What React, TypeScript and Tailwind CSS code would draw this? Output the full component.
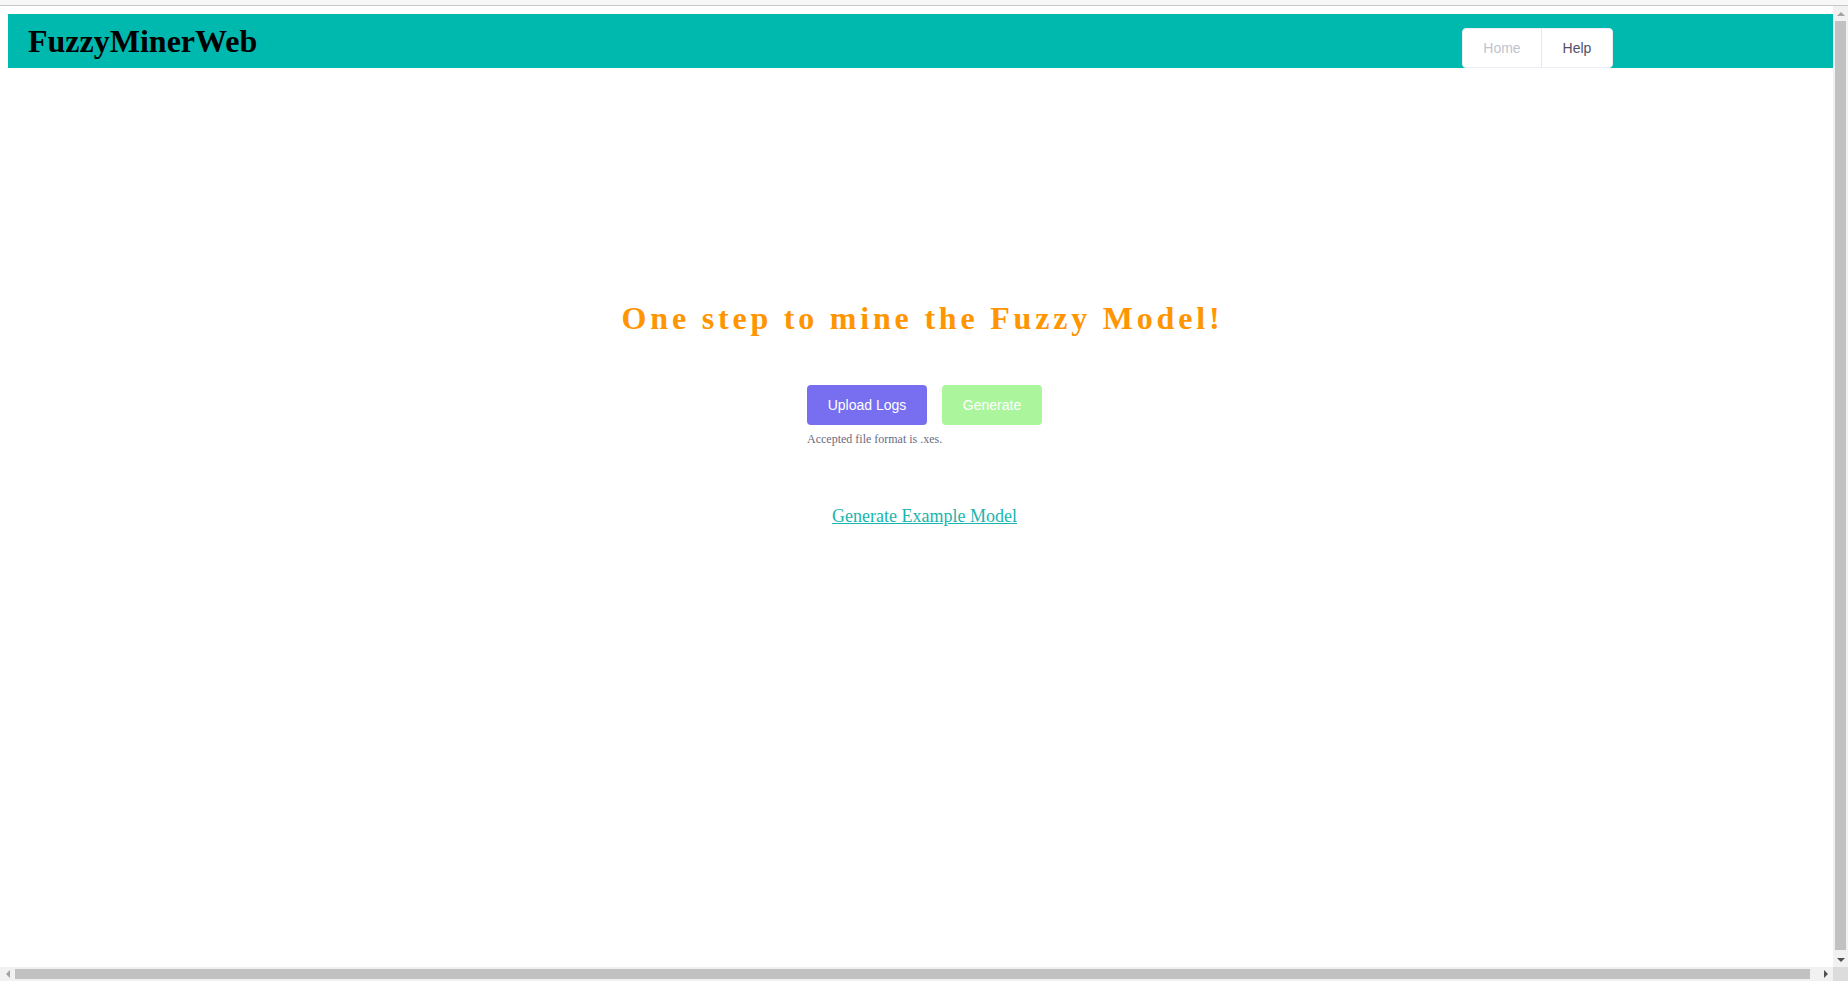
import React from 'react';

const serif = { fontFamily: '"Liberation Serif", "Times New Roman", serif' };
const sans = { fontFamily: '"Liberation Sans", Arial, sans-serif' };

const Header = () => (
    <header className="ml-[8px] mt-[8px] h-[54px] flex justify-between items-start bg-[#00b9ae]">
        <h1 style={serif} className="ml-[20px] mt-[9px] text-[32px] leading-[36px] font-bold text-black whitespace-nowrap">
            FuzzyMinerWeb
        </h1>

        {/* nav menu */}
        <nav style={sans} className="mt-[14px] mr-[220px] h-[40px] flex bg-white rounded-[4px] border border-[#ebeef5] text-[14px]">
            <a className="w-[79px] flex items-center justify-center text-[#c0c4cc] border-r border-[#e4e7ed]">Home</a>
            <a className="w-[70px] flex items-center justify-center text-[#505068]">Help</a>
        </nav>
    </header>
);

const Main = () => (
    <main className="pl-[16px] flex flex-col items-center">
        <h2 style={serif} className="mt-[230px] mr-[4px] text-[32px] leading-[40px] font-bold tracking-[3.8px] text-[#ff9500] whitespace-nowrap">
            One step to mine the Fuzzy Model!
        </h2>

        <div className="mt-[47px] flex flex-col items-start">
            <div style={sans} className="flex gap-[15px] text-[14px] text-white">
                <button className="w-[120px] h-[40px] rounded-[4px] bg-[#776ff0]">Upload Logs</button>
                <button className="w-[100px] h-[40px] rounded-[4px] bg-[#abf59c]">Generate</button>
            </div>
            <p style={serif} className="mt-[7px] text-[12px] leading-[14px] text-[#6b6b80]">
                Accepted file format is .xes.
            </p>
        </div>

        <a style={serif} className="mt-[60px] text-[18px] leading-[20px] text-[#19b5ae] underline">
            Generate Example Model
        </a>
    </main>
);

export default function App() {
    return (
        <div className="w-[1848px] h-[981px] flex flex-col bg-white overflow-hidden">
            {/* browser strip */}
            <div className="h-[6px] shrink-0 bg-[#f7f7f7] border-b border-[#c8c8c8]" />

            <div className="flex-1 flex min-h-0">
                <div className="flex-1 min-w-0 overflow-hidden flex flex-col">
                    <Header />
                    <Main />
                </div>

                {/* vertical scrollbar */}
                <div className="w-[15px] shrink-0 bg-[#f1f1f1] flex flex-col items-center">
                    <div className="h-[15px] flex items-center justify-center">
                        <div className="w-0 h-0 border-x-[4px] border-x-transparent border-b-[4px] border-b-[#a3a3a3]" />
                    </div>
                    <div className="flex-1 w-[11px] bg-[#c1c1c1] mb-[2px]" />
                    <div className="h-[15px] flex items-center justify-center">
                        <div className="w-0 h-0 border-x-[4px] border-x-transparent border-t-[4px] border-t-[#505050]" />
                    </div>
                </div>
            </div>

            {/* horizontal scrollbar */}
            <div className="h-[14px] shrink-0 flex">
                <div className="flex-1 bg-[#f1f1f1] flex items-center">
                    <div className="w-[15px] flex items-center justify-center">
                        <div className="w-0 h-0 border-y-[4px] border-y-transparent border-r-[4px] border-r-[#a3a3a3]" />
                    </div>
                    <div className="flex-1 h-[10px] bg-[#c1c1c1] mr-[8px]" />
                    <div className="w-[15px] flex items-center justify-center">
                        <div className="w-0 h-0 border-y-[4px] border-y-transparent border-l-[4px] border-l-[#505050]" />
                    </div>
                </div>
                <div className="w-[15px] bg-[#dcdcdc]" />
            </div>
        </div>
    );
}
